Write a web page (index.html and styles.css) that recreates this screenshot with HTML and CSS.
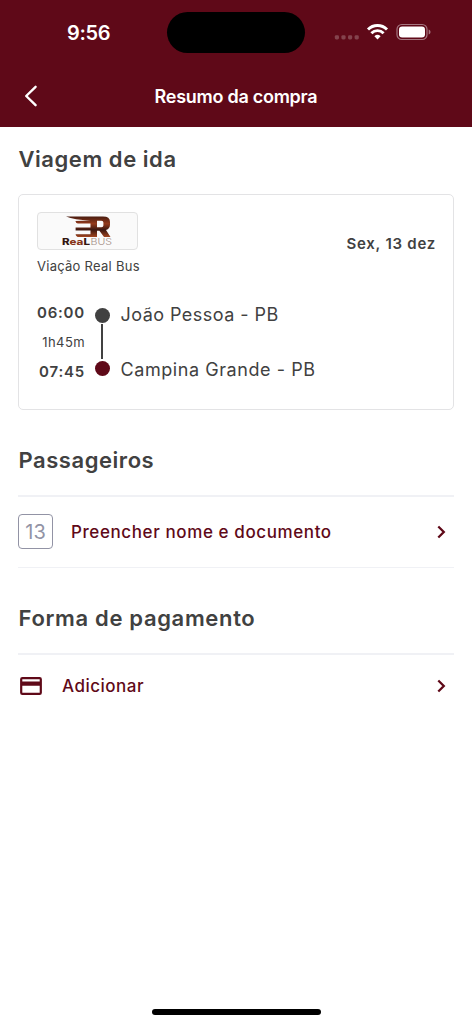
FILE: index.html
```html
<!DOCTYPE html>
<html lang="pt-BR">
<head>
<meta charset="utf-8">
<title>Resumo da compra</title>
<link rel="stylesheet" href="styles.css">
</head>
<body>
<div class="screen">
  <header class="header">
    <div class="status">
      <span class="clock">9:56</span>
      <span class="island"></span>
      <svg class="indicators" width="98" height="20" viewBox="0 0 98 20">
        <g fill="#84434d"><rect x=".8" y="13.2" width="4.2" height="4.2" rx="1.4"/><rect x="7.4" y="13.2" width="4.2" height="4.2" rx="1.4"/><rect x="14" y="13.2" width="4.2" height="4.2" rx="1.4"/><rect x="20.6" y="13.2" width="4.2" height="4.2" rx="1.4"/></g>
        <g fill="none" stroke="#fff" stroke-width="2.9"><path d="M34 7.5a13.4 13.4 0 0 1 19 0"/><path d="M37.4 11.2a8.6 8.6 0 0 1 12.2 0"/></g>
        <path d="M43.5 17.4l-3.1-3.2a4.6 4.6 0 0 1 6.2 0z" fill="#fff"/>
        <rect x="63" y="2.5" width="30" height="15" rx="4.8" fill="none" stroke="#a57680" stroke-width="1.2"/>
        <rect x="65" y="4.6" width="26" height="10.8" rx="3.2" fill="#fff"/>
        <path d="M94.7 7.6c2.4.9 2.4 4 0 4.9z" fill="#a57680"/>
      </svg>
    </div>
    <div class="nav">
      <svg class="back" width="14" height="22" viewBox="0 0 14 22"><path d="M11.6 1.8L2.2 11l9.4 9.2" fill="none" stroke="#fff" stroke-width="2.4" stroke-linecap="round" stroke-linejoin="round"/></svg>
      <h1 class="title">Resumo da compra</h1>
    </div>
  </header>
  <main class="content">
    <h2 class="heading">Viagem de ida</h2>
    <section class="card">
      <div class="card-top">
        <div class="company">
          <div class="logo">
            <svg width="98" height="36" viewBox="0 0 98 36">
              <defs><linearGradient id="copper" x1="0" y1="0" x2="0" y2="1"><stop offset="0" stop-color="#4a1c10"/><stop offset=".35" stop-color="#943a1b"/><stop offset=".65" stop-color="#3b1710"/><stop offset="1" stop-color="#a2451f"/></linearGradient></defs>
              <path fill="url(#copper)" fill-rule="evenodd" d="M28 3.6H65q7 0 7 5.4v2.6q0 4.4-4 5.4L72.5 24H66l-4.6-6.2H59V24H41q-3 0-3.4-2.8H52.5V17.4H37.6V14.6H52.5V10.6H40q-2 0-2.6-2.6L52.5 7.4Q36 7 28 3.6zM59 7.8v6.4h4.4q2 0 2-1.8v-2.8q0-1.8-2-1.8z"/>
              <text class="logo-bold" x="24" y="32" textLength="28" lengthAdjust="spacingAndGlyphs">R<tspan fill="#873619">ea</tspan>L</text>
              <text class="logo-light" x="52.5" y="32" textLength="21.5" lengthAdjust="spacingAndGlyphs">BUS</text>
            </svg>
          </div>
          <span class="company-name">Viação Real Bus</span>
        </div>
        <span class="date">Sex, 13 dez</span>
      </div>
      <div class="trip">
        <div class="times"><span class="time">06:00</span><span class="duration">1h45m</span><span class="time arrival">07:45</span></div>
        <div class="route"><span class="dot"></span><span class="line"></span><span class="dot dot-end"></span></div>
        <div class="cities"><span class="origin">João Pessoa - PB</span><span class="destination">Campina Grande - PB</span></div>
      </div>
    </section>
    <h2 class="heading passengers">Passageiros</h2>
    <div class="row passenger">
      <span class="seat">13</span>
      <span class="link">Preencher nome e documento</span>
      <svg class="chevron" width="12" height="16" viewBox="0 0 12 16"><path d="M2.3 2.5L7.8 8l-5.5 5.5" fill="none" stroke="#5f0918" stroke-width="2.3"/></svg>
    </div>
    <h2 class="heading payment">Forma de pagamento</h2>
    <div class="row method">
      <svg class="credit" width="24" height="20" viewBox="0 0 24 20"><path fill="#5f0918" fill-rule="evenodd" d="M3.4 1H20.6Q22.9 1 22.9 3.3V16.7Q22.9 19 20.6 19H3.4Q1.1 19 1.1 16.7V3.3Q1.1 1 3.4 1zM3.3 3.2V5.5H20.7V3.2zM3.3 9.8V16.8H20.7V9.8z"/></svg>
      <span class="link add">Adicionar</span>
      <svg class="chevron" width="12" height="16" viewBox="0 0 12 16"><path d="M2.3 2.5L7.8 8l-5.5 5.5" fill="none" stroke="#5f0918" stroke-width="2.3"/></svg>
    </div>
  </main>
  <div class="home"></div>
</div>
</body>
</html>
```
FILE: styles.css
```css
* { box-sizing: border-box; }
body { margin: 0; background: #fff; color: #414141; font-family: Inter, "Liberation Sans", sans-serif; }
.screen { width: 472px; height: 1024px; display: flex; flex-direction: column; overflow: hidden; }
.header { height: 126.5px; flex: none; background: #5f0918; color: #fff; }
.status { height: 65px; display: grid; grid-template-columns: 167px 138px 1fr; align-items: center; }
.clock { padding-left: 67px; font-size: 20px; font-weight: 600; letter-spacing: -.3px; line-height: 24px; }
.island { height: 41px; border-radius: 21px; background: #000; }
.indicators { margin-left: 29px; margin-bottom: 1px; }
.nav { height: 61px; display: grid; grid-template-columns: 50px 1fr 50px; align-items: center; }
.back { margin-left: 24px; }
.title { margin: 2px 0 0; text-align: center; font-size: 18px; font-weight: 600; letter-spacing: -.27px; line-height: 24px; }
.content { padding: 18px 18px 0; flex: 1; }
.heading { margin: 0; padding-left: .5px; font-size: 22px; font-weight: 600; letter-spacing: .55px; line-height: 28px; }
.card { height: 216px; margin-top: 21px; padding: 17px 18px; border: 1.5px solid #e3e3e5; border-radius: 5px; }
.card-top { display: flex; justify-content: space-between; align-items: center; }
.company { display: flex; flex-direction: column; }
.logo { width: 101px; height: 38px; border: 1px solid #e1e1e1; border-radius: 4px; background: #fafafa; }
.logo svg { display: block; }
.logo-bold { font: 800 9px Inter, sans-serif; fill: #321611; }
.logo-light { font: 300 9px Inter, sans-serif; fill: #a28d85; }
.company-name { margin-top: 7px; font-size: 13px; line-height: 18px; letter-spacing: .27px; }
.date { margin: 2px -1px 0 0; font-size: 15px; font-weight: 600; line-height: 18px; letter-spacing: .75px; }
.trip { display: flex; margin-top: 29px; }
.times { width: 48px; display: flex; flex-direction: column; align-items: flex-end; }
.time { font-size: 15px; font-weight: 600; line-height: 18px; letter-spacing: .8px; }
.duration { margin: 11px 0 12px; font-size: 13px; line-height: 18px; letter-spacing: .4px; }
.route { width: 15px; margin: 4px 0 0 10px; display: flex; flex-direction: column; align-items: center; }
.dot { width: 15px; height: 15px; border-radius: 50%; background: #414141; }
.dot-end { background: #5f0918; }
.line { width: 2px; height: 35px; margin: 1px 2px 2px 0; background: #414141; }
.cities { margin: -1px 0 0 10.5px; display: flex; flex-direction: column; font-size: 18px; line-height: 24px; letter-spacing: .57px; }
.origin { letter-spacing: .46px; }
.destination { margin-top: 31px; }
.passengers { margin-top: 36px; }
.row { display: flex; align-items: center; border-top: 2px solid #f0f1f5; }
.passenger { height: 73px; margin-top: 21px; border-bottom: 1px solid #f0f1f5; }
.seat { width: 35px; height: 35px; border: 1px solid #9293a5; border-radius: 4px; color: #9293a5; font-size: 20px; line-height: 34px; text-align: center; }
.link { margin-left: 18px; color: #5f0918; font-size: 17px; font-weight: 500; line-height: 22px; letter-spacing: .6px; }
.chevron { margin-left: auto; margin-right: 6px; }
.payment { margin-top: 36px; letter-spacing: .66px; }
.method { height: 64px; margin-top: 21px; }
.credit { margin-left: 1px; }
.add { margin-left: 19px; letter-spacing: .5px; }
.home { flex: none; width: 169px; height: 6px; margin: 0 auto 9px; border-radius: 3px; background: #000; }
```
